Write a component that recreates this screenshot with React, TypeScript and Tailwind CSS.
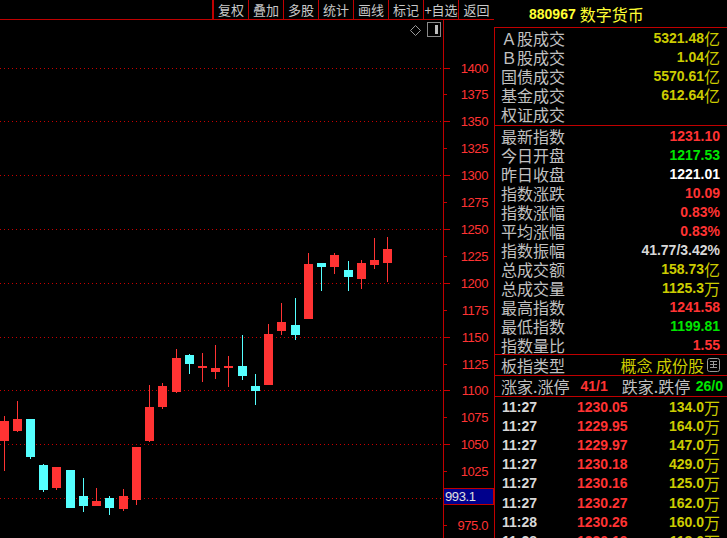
const RED = "#ff3333";
const CYAN = "#55ffff";

type Candle = [number, number, number, number, number, "r" | "c"];

// x, bodyTop, bodyBottom, wickTop, wickBottom (page px)
const candles: Candle[] = [
  [0, 421, 441, 416, 471, "r"],
  [13, 419, 431, 401, 432, "r"],
  [26, 419, 457, 419, 459, "c"],
  [39, 465, 490, 464, 492, "c"],
  [52, 467, 488, 467, 490, "r"],
  [66, 470, 508, 470, 508, "c"],
  [79, 496, 506, 478, 512, "c"],
  [92, 501, 506, 488, 506, "r"],
  [105, 498, 508, 496, 515, "c"],
  [119, 496, 509, 489, 511, "r"],
  [132, 447, 500, 447, 505, "r"],
  [145, 407, 441, 385, 442, "r"],
  [158, 386, 407, 383, 409, "r"],
  [172, 358, 392, 349, 393, "r"],
  [185, 355, 364, 354, 374, "c"],
  [198, 366, 368, 353, 382, "r"],
  [211, 368, 372, 345, 379, "r"],
  [224, 366, 368, 356, 387, "r"],
  [238, 366, 376, 335, 380, "c"],
  [251, 386, 391, 374, 405, "c"],
  [264, 334, 385, 324, 385, "r"],
  [277, 322, 331, 303, 335, "r"],
  [291, 325, 335, 298, 340, "c"],
  [304, 264, 319, 253, 319, "r"],
  [317, 263, 267, 263, 291, "c"],
  [330, 255, 267, 253, 274, "r"],
  [344, 270, 277, 261, 291, "c"],
  [357, 263, 279, 260, 289, "r"],
  [370, 260, 265, 238, 269, "r"],
  [383, 249, 263, 237, 282, "r"],
];

const priceY = (p: number) => Math.round(67.5 + (1400 - p) * 1.0765);

const grid = [1400, 1350, 1300, 1250, 1200, 1150, 1100, 1050, 1000];
const ticks: number[] = [];
for (let p = 1400; p >= 975; p -= 25) ticks.push(p);
const labels = [1400, 1375, 1350, 1325, 1300, 1275, 1250, 1225, 1200, 1175, 1150, 1125, 1100, 1075, 1050, 1025];

const tools = ["复权", "叠加", "多股", "统计", "画线", "标记", "+自选", "返回"];

const group1 = [
  { label: "Ａ股成交", value: "5321.48", unit: "亿" },
  { label: "Ｂ股成交", value: "1.04", unit: "亿" },
  { label: "国债成交", value: "5570.61", unit: "亿" },
  { label: "基金成交", value: "612.64", unit: "亿" },
  { label: "权证成交", value: "", unit: "" },
];

const group2 = [
  { label: "最新指数", value: "1231.10", color: "text-[#ff3333]" },
  { label: "今日开盘", value: "1217.53", color: "text-[#00e600]" },
  { label: "昨日收盘", value: "1221.01", color: "text-white" },
  { label: "指数涨跌", value: "10.09", color: "text-[#ff3333]" },
  { label: "指数涨幅", value: "0.83%", color: "text-[#ff3333]" },
  { label: "平均涨幅", value: "0.83%", color: "text-[#ff3333]" },
  { label: "指数振幅", value: "41.77/3.42%", color: "text-[#d8d8d8]" },
  { label: "总成交额", value: "158.73", color: "text-[#cccc00]", unit: "亿" },
  { label: "总成交量", value: "1125.3", color: "text-[#cccc00]", unit: "万" },
  { label: "最高指数", value: "1241.58", color: "text-[#ff3333]" },
  { label: "最低指数", value: "1199.81", color: "text-[#00e600]" },
  { label: "指数量比", value: "1.55", color: "text-[#ff3333]" },
];

const trades = [
  ["11:27", "1230.05", "134.0"],
  ["11:27", "1229.95", "164.0"],
  ["11:27", "1229.97", "147.0"],
  ["11:27", "1230.18", "429.0"],
  ["11:27", "1230.16", "125.0"],
  ["11:27", "1230.27", "162.0"],
  ["11:28", "1230.26", "160.0"],
  ["11:28", "1230.19", "118.0"],
];

const num = "font-['Liberation_Sans',Arial,sans-serif] font-bold text-[14px] leading-none";
const cjk = "font-['Noto_Sans_CJK_SC',sans-serif] text-[16px] leading-none";

const Chart = () => (
  <div className="relative w-[443px] h-full shrink-0">
    <svg width={443} height={518} viewBox="0 20 443 518" className="block">
      {grid.map((p) => (
        <line
          key={p}
          x1={0}
          x2={443}
          y1={priceY(p) + 0.5}
          y2={priceY(p) + 0.5}
          stroke="#c80000"
          strokeWidth={1}
          strokeDasharray="1 3"
        />
      ))}
      {candles.map(([x, bt, bb, wt, wb, c], i) => {
        const fill = c === "r" ? RED : CYAN;
        return (
          <g key={i} fill={fill}>
            <rect x={x + 4} y={wt} width={1} height={wb - wt} />
            <rect x={x} y={bt} width={9} height={Math.max(bb - bt, 2)} />
          </g>
        );
      })}
    </svg>
    <div className="absolute left-[410px] top-[5px] w-[11px] h-[11px] flex items-center justify-center">
      <svg width={11} height={11} viewBox="0 0 11 11">
        <path d="M5.5 0.5 L10.5 5.5 L5.5 10.5 L0.5 5.5 Z" fill="none" stroke="#9a9a9a" strokeWidth={1} />
      </svg>
    </div>
    <div className="absolute left-[427px] top-[2px] w-[14px] h-[15px] border border-[#8a8a8a] flex justify-end p-[2px]">
      <div className="w-[3px] h-full bg-[#bdbdbd]" />
    </div>
  </div>
);

const Axis = () => (
  <div className="relative flex-1 h-full border-l border-[#c00000]">
    <svg width={50} height={518} viewBox="444 20 50 518" className="absolute left-0 top-0">
      {ticks.map((p) => (
        <rect
          key={p}
          x={444}
          y={priceY(p)}
          width={p % 50 === 0 ? 6 : 3}
          height={1}
          fill="#c80000"
        />
      ))}
    </svg>
    {labels.map((p) => (
      <span
        key={p}
        className="absolute right-[6px] font-['Liberation_Sans',Arial,sans-serif] text-[13px] tracking-[-0.4px] leading-[16px] text-[#ff3333]"
        style={{ top: priceY(p) - 20 - 7 }}
      >
        {p}
      </span>
    ))}
    <span
      className="absolute right-[6px] font-['Liberation_Sans',Arial,sans-serif] text-[13px] tracking-[-0.4px] leading-[16px] text-[#ff3333]"
      style={{ top: priceY(975) - 20 - 7 }}
    >
      975.0
    </span>
    <div className="absolute left-[-1px] right-0 top-[468px] h-[17px] border border-[#c00000] bg-[#00008c] flex items-center pl-[1px]">
      <span className="font-['Liberation_Sans',Arial,sans-serif] text-[13px] tracking-[-0.4px] leading-none text-[#e0e0e0]">
        993.1
      </span>
    </div>
  </div>
);

const InfoRow = ({
  label,
  value,
  color = "text-[#cccc00]",
  unit,
}: {
  label: string;
  value: string;
  color?: string;
  unit?: string;
}) => (
  <div className="h-[19px] shrink-0 flex items-center pl-[6px] pr-[7px]">
    <span className={`${cjk} text-[#c0c0c0]`}>{label}</span>
    <span className={`ml-auto ${num} ${color}`}>{value}</span>
    {unit && <span className={`${cjk} text-[#cccc00]`}>{unit}</span>}
  </div>
);

export default function App() {
  return (
    <div className="w-[727px] h-[538px] bg-black flex overflow-hidden select-none">
      <div className="w-[494px] h-full shrink-0 flex flex-col">
        <div className="h-[20px] shrink-0 flex border-b border-[#c00000]">
          <div className="w-[214px] border-r-2 border-[#c00000]" />
          {tools.map((t, i) => (
            <div
              key={t}
              className={`w-[35px] flex items-center justify-center font-['Noto_Sans_CJK_SC',sans-serif] text-[13px] leading-none text-[#c8c8c8] ${
                i < tools.length - 1 ? "border-r border-[#c00000]" : ""
              }`}
            >
              {t}
            </div>
          ))}
        </div>
        <div className="flex flex-1 min-h-0">
          <Chart />
          <Axis />
        </div>
      </div>

      <div className="flex-1 flex flex-col min-w-0">
        <div className="h-[27px] shrink-0 flex items-center pl-[35px] gap-[4px]">
          <span className="font-['Liberation_Sans',Arial,sans-serif] font-bold text-[14px] leading-none text-[#ffff33]">
            880967
          </span>
          <span className={`${cjk} text-[#ffff33]`}>数字货币</span>
        </div>
        <div className="flex-1 min-h-0 overflow-hidden flex flex-col border-l border-t border-[#c00000]">
          <div className="shrink-0 pb-[2px] border-b border-[#c00000]">
            {group1.map((r) => (
              <InfoRow key={r.label} label={r.label} value={r.value} unit={r.unit || undefined} />
            ))}
          </div>
          <div className="shrink-0 border-b border-[#c00000]">
            {group2.map((r) => (
              <InfoRow key={r.label} label={r.label} value={r.value} color={r.color} unit={r.unit} />
            ))}
          </div>
          <div className="h-[21px] shrink-0 flex items-center pl-[6px] pr-[7px] border-b border-[#c00000]">
            <span className={`${cjk} text-[#c0c0c0]`}>板指类型</span>
            <span className={`ml-auto ${cjk} text-[#cccc00]`}>概念 成份股</span>
            <svg width={13} height={14} viewBox="0 0 13 14" className="ml-[3px]">
              <rect x={0.5} y={0.5} width={12} height={13} rx={2} fill="none" stroke="#9a9a9a" />
              <rect x={3} y={3} width={7} height={1} fill="#9a9a9a" />
              <rect x={3} y={6} width={7} height={1} fill="#9a9a9a" />
              <rect x={3} y={9} width={7} height={1} fill="#9a9a9a" />
              <rect x={6} y={3} width={1} height={7} fill="#9a9a9a" />
            </svg>
          </div>
          <div className="h-[21px] shrink-0 flex items-center pl-[6px] pr-[4px] border-b border-[#c00000]">
            <span className={`${cjk} text-[#c0c0c0]`}>涨家.涨停</span>
            <span className={`ml-[11px] ${num} text-[#ff3333]`}>41/1</span>
            <span className={`ml-[14px] ${cjk} text-[#c0c0c0]`}>跌家.跌停</span>
            <span className={`ml-auto ${num} text-[#00e600]`}>26/0</span>
          </div>
          <div className="shrink-0 flex flex-col">
            {trades.map(([t, p, v], i) => (
              <div key={i} className="h-[19.2px] shrink-0 flex items-center pl-[7px] pr-[7px]">
                <span className={`w-[75px] ${num} text-[#d8d8d8]`}>{t}</span>
                <span className={`${num} text-[#ff3333]`}>{p}</span>
                <span className={`ml-auto ${num} text-[#cccc00]`}>{v}</span>
                <span className={`${cjk} text-[#cccc00]`}>万</span>
              </div>
            ))}
          </div>
        </div>
      </div>
    </div>
  );
}
